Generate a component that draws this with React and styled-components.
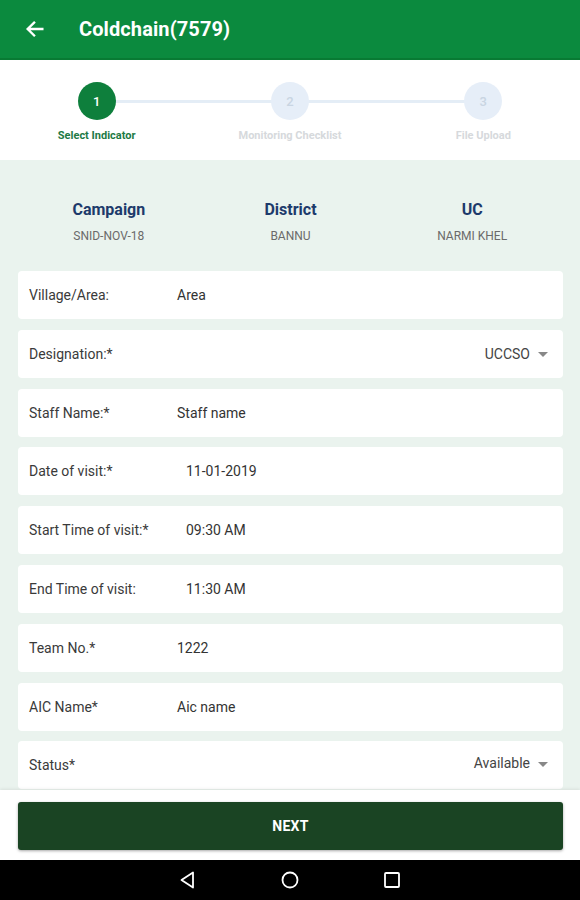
import React from "react";
import styled, { createGlobalStyle } from "styled-components";

const Global = createGlobalStyle`
  html, body { margin: 0; padding: 0; }
  body { font-family: Roboto, "Liberation Sans", sans-serif; background: #fff; }
  * { box-sizing: border-box; }
`;

const Screen = styled.div`
  width: 580px;
  height: 900px;
  display: flex;
  flex-direction: column;
  overflow: hidden;
`;

const AppBar = styled.header`
  height: 60px;
  flex: none;
  background: #0b8a3e;
  border-bottom: 2px solid #087a33;
  display: flex;
  align-items: center;
  padding-left: 24px;
  gap: 33px;
  color: #fff;
`;

const Title = styled.h1`
  margin: 0;
  font-size: 20px;
  font-weight: 700;
  letter-spacing: 0.1px;
`;

const Stepper = styled.div`
  height: 100px;
  flex: none;
  background: #fff;
  display: grid;
  grid-template-columns: repeat(3, 1fr);
  padding-top: 22px;
`;

const Step = styled.div`
  position: relative;
  display: flex;
  flex-direction: column;
  align-items: center;
  gap: 9px;
  &::after {
    content: "";
    display: ${(p) => (p.$last ? "none" : "block")};
    position: absolute;
    top: 18px;
    left: 50%;
    width: 100%;
    height: 3px;
    background: #e4edf6;
  }
`;

const Circle = styled.div`
  position: relative;
  z-index: 1;
  width: 38px;
  height: 38px;
  border-radius: 50%;
  background: ${(p) => (p.$active ? "#0e7f3c" : "#e6eef8")};
  color: ${(p) => (p.$active ? "#fff" : "#c9d5e2")};
  display: flex;
  align-items: center;
  justify-content: center;
  font-size: 13px;
  font-weight: 500;
`;

const StepLabel = styled.div`
  font-size: 11px;
  font-weight: 700;
  color: ${(p) => (p.$active ? "#1d7a45" : "#d6d9dc")};
`;

const Content = styled.main`
  flex: 1;
  background: #eaf3ee;
  overflow: hidden;
  padding: 0 17px 0 18px;
`;

const InfoRow = styled.div`
  display: grid;
  grid-template-columns: repeat(3, 1fr);
  padding: 40px 0 28px;
`;

const InfoCell = styled.div`
  display: flex;
  flex-direction: column;
  align-items: center;
  gap: 10px;
`;

const InfoTitle = styled.div`
  font-size: 16px;
  font-weight: 700;
  color: #1d3a6b;
`;

const InfoValue = styled.div`
  font-size: 12px;
  color: #6a6a6a;
`;

const Fields = styled.div`
  display: flex;
  flex-direction: column;
  gap: 10.8px;
`;

const Card = styled.div`
  height: 48px;
  background: #fff;
  border-radius: 4px;
  display: flex;
  align-items: center;
  padding: 0 15px 0 11px;
  font-size: 14px;
  color: #333;
  flex: none;
`;

const Label = styled.div`
  width: ${(p) => p.$w}px;
  flex: none;
  color: #3a3a3a;
`;

const Value = styled.div`
  color: #333;
`;

const Dropdown = styled.div`
  margin-left: auto;
  display: flex;
  align-items: center;
  gap: 8px;
  color: #444;
  margin-top: ${(p) => p.$up || 0}px;
`;

const Caret = styled.span`
  width: 0;
  height: 0;
  border-left: 5px solid transparent;
  border-right: 5px solid transparent;
  border-top: 5px solid #888;
  margin-top: 2px;
`;

const Footer = styled.div`
  height: 70px;
  flex: none;
  background: #fff;
  box-shadow: 0 -1px 3px rgba(0, 0, 0, 0.08);
  padding: 12px 17px 10px 18px;
  position: relative;
`;

const NextButton = styled.button`
  width: 100%;
  height: 48px;
  border: none;
  border-radius: 3px;
  background: #1a4423;
  color: #fff;
  font-family: Roboto, "Liberation Sans", sans-serif;
  font-size: 14px;
  font-weight: 700;
  letter-spacing: 0.3px;
  box-shadow: 0 1px 3px rgba(0, 0, 0, 0.35);
`;

const NavBar = styled.nav`
  height: 40px;
  flex: none;
  background: #000;
  display: flex;
  align-items: center;
  justify-content: center;
  gap: 82px;
`;

const fields = [
  { label: "Village/Area:", value: "Area" },
  { label: "Designation:*", select: "UCCSO" },
  { label: "Staff Name:*", value: "Staff name" },
  { label: "Date of visit:*", value: "11-01-2019", w: 157 },
  { label: "Start Time of visit:*", value: "09:30 AM", w: 157 },
  { label: "End Time of visit:", value: "11:30 AM", w: 157 },
  { label: "Team No.*", value: "1222" },
  { label: "AIC Name*", value: "Aic name" },
  { label: "Status*", select: "Available", up: -4 },
];

const steps = ["Select Indicator", "Monitoring Checklist", "File Upload"];
const info = [
  ["Campaign", "SNID-NOV-18"],
  ["District", "BANNU"],
  ["UC", "NARMI KHEL"],
];

export default function App() {
  return (
    <>
      <Global />
      <Screen>
        <AppBar>
          <svg width="22" height="22" viewBox="0 0 24 24" fill="none" stroke="#fff" strokeWidth="2.6" strokeLinecap="square">
            <path d="M20 12H5M11 5l-7 7 7 7" />
          </svg>
          <Title>Coldchain(7579)</Title>
        </AppBar>
        <Stepper>
          {steps.map((s, i) => (
            <Step key={s} $last={i === steps.length - 1}>
              <Circle $active={i === 0}>{i + 1}</Circle>
              <StepLabel $active={i === 0}>{s}</StepLabel>
            </Step>
          ))}
        </Stepper>
        <Content>
          <InfoRow>
            {info.map(([t, v]) => (
              <InfoCell key={t}>
                <InfoTitle>{t}</InfoTitle>
                <InfoValue>{v}</InfoValue>
              </InfoCell>
            ))}
          </InfoRow>
          <Fields>
            {fields.map((f) => (
              <Card key={f.label}>
                <Label $w={f.w || 148}>{f.label}</Label>
                {f.select ? (
                  <Dropdown $up={f.up}>
                    {f.select}
                    <Caret />
                  </Dropdown>
                ) : (
                  <Value>{f.value}</Value>
                )}
              </Card>
            ))}
          </Fields>
        </Content>
        <Footer>
          <NextButton>NEXT</NextButton>
        </Footer>
        <NavBar>
          <svg width="20" height="20" viewBox="0 0 20 20" fill="none" stroke="#fff" strokeWidth="1.8" strokeLinejoin="round">
            <path d="M15 2.5v15L3.5 10z" />
          </svg>
          <svg width="20" height="20" viewBox="0 0 20 20" fill="none" stroke="#fff" strokeWidth="1.8">
            <circle cx="10" cy="10" r="7.5" />
          </svg>
          <svg width="20" height="20" viewBox="0 0 20 20" fill="none" stroke="#fff" strokeWidth="1.8">
            <rect x="3" y="3" width="14" height="14" rx="1" />
          </svg>
        </NavBar>
      </Screen>
    </>
  );
}
